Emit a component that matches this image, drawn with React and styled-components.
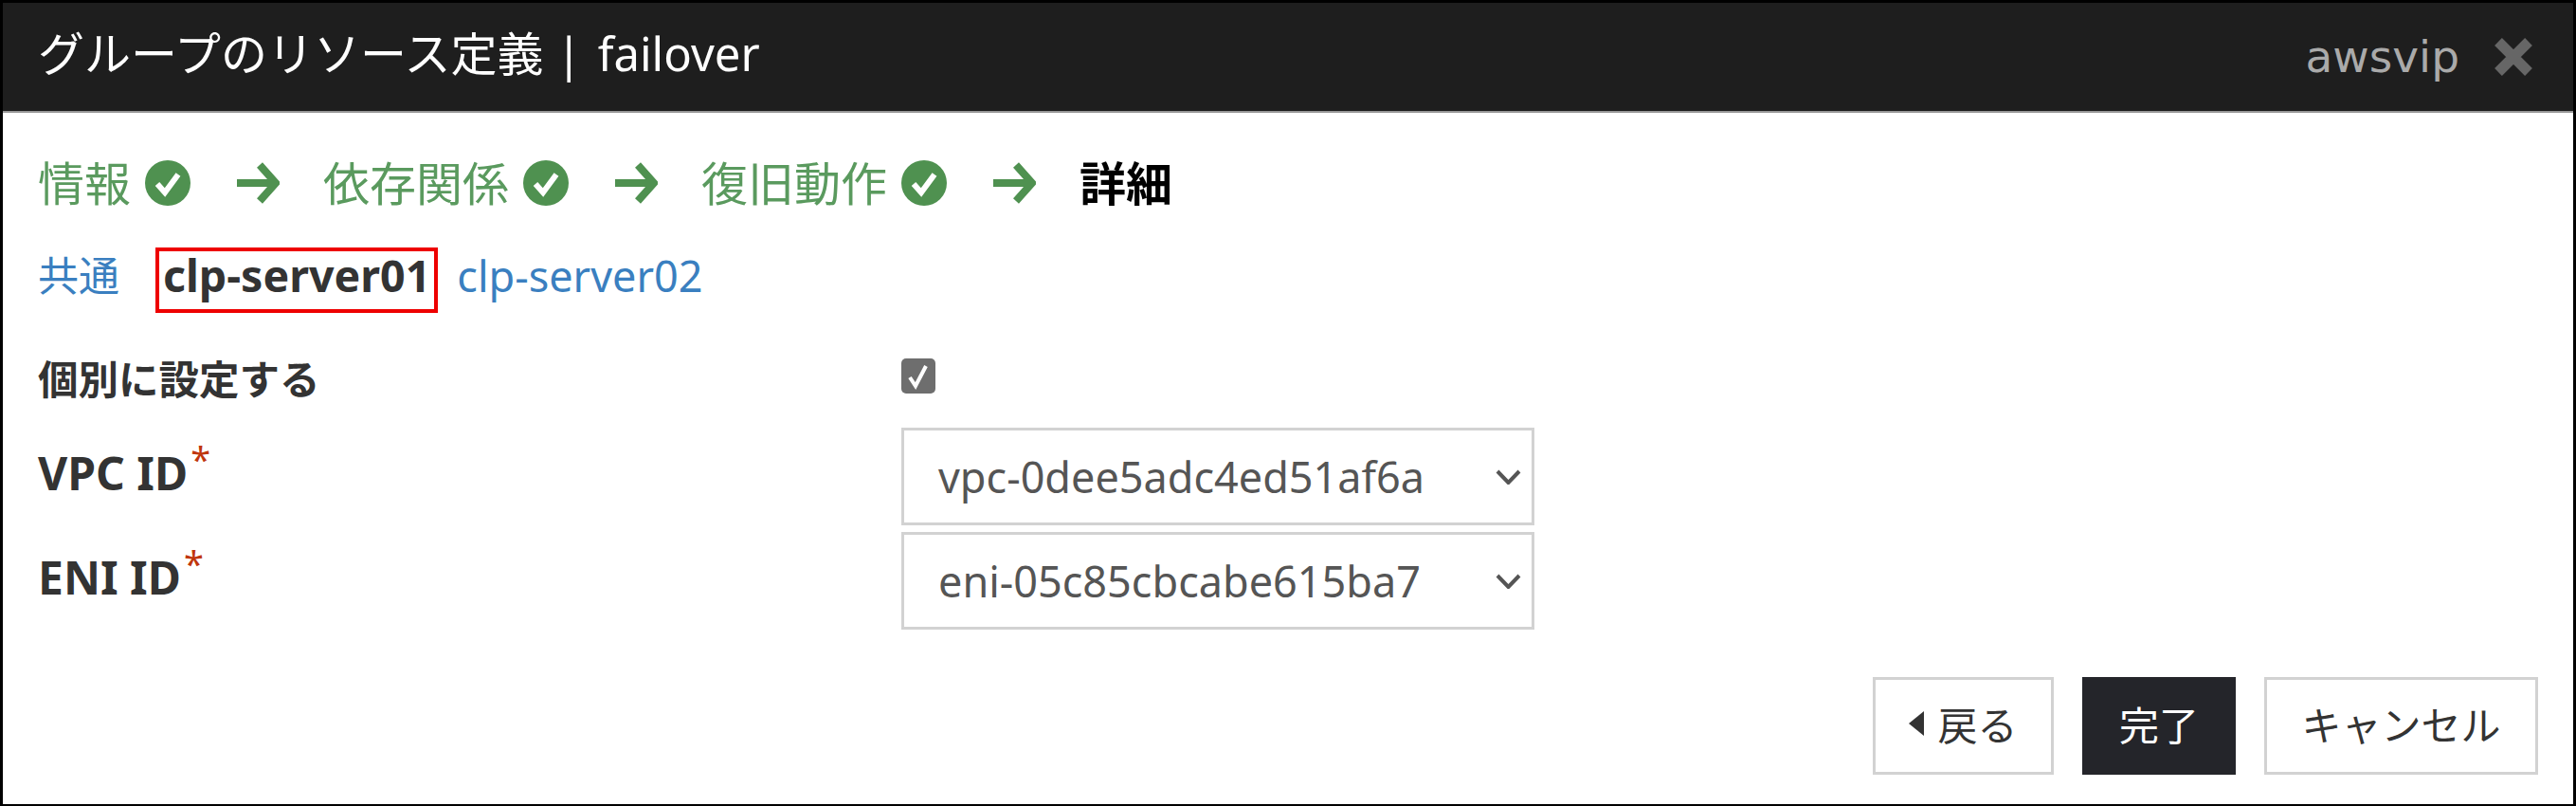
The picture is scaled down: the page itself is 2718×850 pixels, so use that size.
import React from "react";
import styled, { createGlobalStyle } from "styled-components";

const GlobalStyle = createGlobalStyle`
    html, body {
        margin: 0;
        padding: 0;
        background: #FFFFFF;
    }
    body {
        font-family: "Noto Sans", "Noto Sans CJK JP", sans-serif;
        color: #333333;
    }
`;

const STEPS = ["情報", "依存関係", "復旧動作"];

function CheckCircle() {
    return (
        <svg width="48" height="48" viewBox="0 0 48 48">
            <circle cx="24" cy="24" r="24" fill="#4F9150" />
            <path d="M13 25l8 9 14-19" fill="none" stroke="#FFFFFF" strokeWidth="6" />
        </svg>
    );
}

function StepArrow() {
    return (
        <svg width="45" height="44" viewBox="0 0 45 44">
            <path d="M0 22h40M24 3l17 19-17 19" fill="none" stroke="#4F9150" strokeWidth="8" />
        </svg>
    );
}

function Chevron() {
    return (
        <svg width="27" height="16" viewBox="0 0 27 16">
            <path d="M2 2l11.500 12L25 2" fill="none" stroke="#555555" strokeWidth="4" />
        </svg>
    );
}

export default function App() {
    return (
        <>
            <GlobalStyle />
            <Dialog>
                <Header>
                    <Title>
                        グループのリソース定義<TitleBar>|</TitleBar>failover
                    </Title>
                    <HeaderRight>
                        <ResourceName>awsvip</ResourceName>
                        <svg width="40" height="40" viewBox="0 0 40 40">
                            <path d="M4 4l32 32M36 4L4 36" fill="none" stroke="#666666" strokeWidth="11" />
                        </svg>
                    </HeaderRight>
                </Header>
                <Content>
                    <Stepper>
                        {STEPS.map((step) => (
                            <React.Fragment key={step}>
                                <StepName>{step}</StepName>
                                <CheckCircle />
                                <ArrowWrap>
                                    <StepArrow />
                                </ArrowWrap>
                            </React.Fragment>
                        ))}
                        <StepCurrent>詳細</StepCurrent>
                    </Stepper>
                    <Tabs>
                        <TabLinkCjk>共通</TabLinkCjk>
                        <ActiveTab>clp-server01</ActiveTab>
                        <TabLink>clp-server02</TabLink>
                    </Tabs>
                    <Form>
                        <CheckLabel>個別に設定する</CheckLabel>
                        <Checkbox>
                            <svg width="24" height="28" viewBox="0 0 24 28">
                                <path d="M3 15l6 9L20 3" fill="none" stroke="#FFFFFF" strokeWidth="4" />
                            </svg>
                        </Checkbox>
                        <FieldLabel>
                            VPC ID<Required>*</Required>
                        </FieldLabel>
                        <SelectBox>
                            <SelectValue>vpc-0dee5adc4ed51af6a</SelectValue>
                            <Chevron />
                        </SelectBox>
                        <FieldLabel>
                            ENI ID<Required>*</Required>
                        </FieldLabel>
                        <SelectBox>
                            <SelectValue>eni-05c85cbcabe615ba7</SelectValue>
                            <Chevron />
                        </SelectBox>
                    </Form>
                    <Footer>
                        <BackButton>
                            <BackTriangle />
                            戻る
                        </BackButton>
                        <PrimaryButton>完了</PrimaryButton>
                        <CancelButton>キャンセル</CancelButton>
                    </Footer>
                </Content>
            </Dialog>
        </>
    );
}

const Dialog = styled.div`
    width: 2718px;
    height: 850px;
    box-sizing: border-box;
    border: 3px solid #000000;
    border-bottom-width: 2px;
    background: #FFFFFF;
    overflow: hidden;
`;
const Header = styled.div`
    height: 116px;
    box-sizing: border-box;
    border-bottom: 2px solid #999999;
    background: #1E1E1E;
    padding: 0 43px 8px 37px;
    display: flex;
    align-items: center;
    justify-content: space-between;
`;
const Title = styled.div`
    font-size: 49px;
    line-height: 60px;
    color: #FFFFFF;
    white-space: pre;
`;
const TitleBar = styled.span`
    margin: 0 17px 0 13px;
`;
const HeaderRight = styled.div`
    display: flex;
    align-items: center;
    gap: 37px;
    padding-top: 8px;
`;
const ResourceName = styled.span`
    font-family: "DejaVu Sans", sans-serif;
    font-size: 47px;
    line-height: 60px;
    color: #AAAAAA;
`;
const Content = styled.div`
    padding: 50px 37px 0;
`;
const Stepper = styled.div`
    display: flex;
    align-items: center;
    height: 48px;
`;
const StepName = styled.span`
    font-size: 49px;
    line-height: 48px;
    color: #5A9A5E;
    margin-right: 15px;
`;
const StepCurrent = styled(StepName)`
    color: #000000;
    font-weight: 700;
    margin-right: 0;
`;
const ArrowWrap = styled.span`
    display: flex;
    margin: 0 46px 0 49px;
`;
const Tabs = styled.div`
    display: flex;
    align-items: center;
    height: 69px;
    margin-top: 44px;
`;
const TabLink = styled.span`
    font-size: 45px;
    line-height: 60px;
    color: #3A7FC0;
    padding-bottom: 10px;
`;
const TabLinkCjk = styled(TabLink)`
    font-size: 43px;
    margin-right: 38px;
`;
const ActiveTab = styled.span`
    box-sizing: border-box;
    height: 69px;
    padding: 0 4px;
    margin-right: 20px;
    border: 4px solid #EE0000;
    font-size: 46.500px;
    font-weight: 700;
    line-height: 51px;
    color: #333333;
`;
const Form = styled.div`
    display: grid;
    grid-template-columns: 911px 668px;
    row-gap: 7px;
    margin-top: 48px;
`;
const CheckLabel = styled.div`
    font-size: 42.500px;
    font-weight: 700;
    line-height: 44px;
    height: 44px;
    margin-bottom: 22px;
`;
const Checkbox = styled.div`
    width: 36px;
    height: 37px;
    border-radius: 5px;
    background: #6E6E6E;
    display: flex;
    align-items: center;
    justify-content: center;
`;
const FieldLabel = styled.div`
    display: flex;
    align-items: center;
    padding-bottom: 8px;
    font-size: 48px;
    font-weight: 700;
    color: #333333;
`;
const Required = styled.span`
    align-self: flex-start;
    margin-top: 14px;
    margin-left: 3px;
    font-size: 38px;
    line-height: 38px;
    font-weight: 400;
    color: #C0360C;
`;
const SelectBox = styled.div`
    box-sizing: border-box;
    height: 103px;
    border: 3px solid #D2D2D2;
    padding: 0 11px 0 36px;
    display: flex;
    align-items: center;
    justify-content: space-between;
`;
const SelectValue = styled.span`
    font-size: 45px;
    line-height: 60px;
    color: #555555;
`;
const Footer = styled.div`
    display: flex;
    justify-content: flex-end;
    gap: 30px;
    margin-top: 50px;
`;
const Button = styled.div`
    box-sizing: border-box;
    height: 103px;
    border: 3px solid #D2D2D2;
    padding-bottom: 6px;
    display: flex;
    align-items: center;
    justify-content: center;
    font-size: 42px;
    color: #333333;
`;
const BackButton = styled(Button)`
    width: 191px;
    gap: 14px;
`;
const BackTriangle = styled.span`
    width: 0;
    height: 0;
    border-style: solid;
    border-width: 13px 16px 13px 0;
    border-color: transparent #333333 transparent transparent;
`;
const PrimaryButton = styled(Button)`
    width: 162px;
    border: none;
    background: #24252A;
    color: #FFFFFF;
`;
const CancelButton = styled(Button)`
    width: 289px;
`;
